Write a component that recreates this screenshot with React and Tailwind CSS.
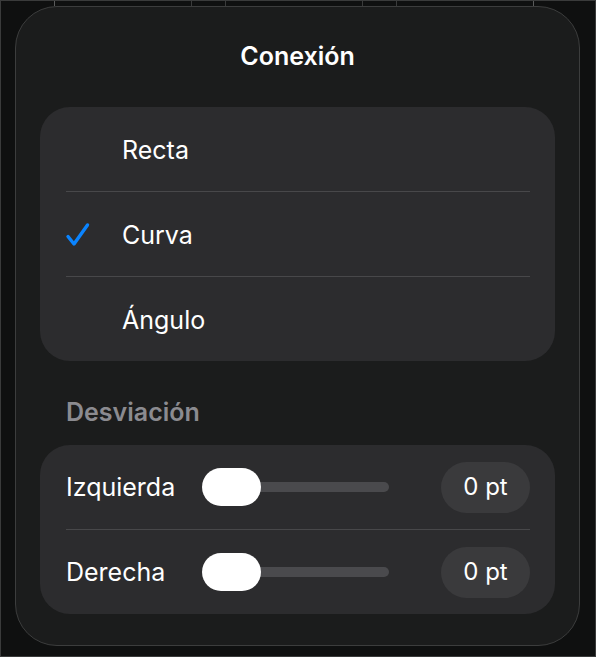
const OPTIONS = ["Recta", "Curva", "Ángulo"];

function Divider() {
  return <div className="h-px bg-[#48484a] ml-[26px] mr-[25px]" />;
}

function CheckMark() {
  return (
    <svg width="30" height="30" viewBox="0 0 30 30" fill="none" className="-ml-[4px] mt-[1px]">
      <path d="M6 16.5 L12 24 L25.5 5" stroke="#0a84ff" strokeWidth="3.4" strokeLinecap="round" strokeLinejoin="round" />
    </svg>
  );
}

function SliderRow({ label }) {
  return (
    <div className="h-[84px] flex items-center pl-[26px] pr-[25px]">
      <span className="w-[136px] pt-[2px] text-[25px] text-white">{label}</span>
      <div className="relative w-[187px] h-[38px] flex items-center">
        <div className="absolute left-[20px] right-0 h-[10px] rounded-full bg-[#4a4a4d]" />
        <div className="relative w-[59px] h-[38px] rounded-full bg-white" />
      </div>
      <div className="ml-auto w-[89px] h-[51px] rounded-full bg-[#3a3a3c] flex items-center justify-center text-[24px] text-white">
        0 pt
      </div>
    </div>
  );
}

export default function App() {
  const selected = "Curva";

  return (
    <div className="w-[596px] h-[657px] bg-[#0f1010] border border-[#3a3b3b] overflow-hidden font-['Inter',sans-serif]">
      {/* backdrop grid peeking above the popover */}
      <div className="h-[5px] flex">
        <div className="w-[54px] border-r border-[#5a5b5b]" />
        <div className="w-[137px] border-r border-[#3a3b3b]" />
        <div className="w-[34px] border-r border-[#3a3b3b]" />
        <div className="w-[137px] border-r border-[#3a3b3b]" />
        <div className="w-[34px] border-r border-[#3a3b3b]" />
        <div className="w-[137px] border-r border-[#5a5b5b]" />
      </div>

      <div className="ml-[14px] w-[565px] h-[640px] rounded-[42px] border border-[#3c3d3d] bg-[#1b1c1c]">
        <div className="h-[100px] flex items-center justify-center">
          <h1 className="text-[25px] font-semibold text-white">Conexión</h1>
        </div>

        <div className="mx-[24px] rounded-[30px] bg-[#2c2c2e]">
          {OPTIONS.map((opt, i) => (
            <div key={opt}>
              {i > 0 && <Divider />}
              <div className="h-[84px] flex items-center pl-[26px]">
                <div className="w-[56px]">{opt === selected && <CheckMark />}</div>
                <span className="pt-[3px] text-[25px] text-white">{opt}</span>
              </div>
            </div>
          ))}
        </div>

        <div className="h-[84px] pt-[37px] pl-[50px]">
          <h2 className="text-[25px] leading-[28px] font-semibold text-[#8b8b90]">Desviación</h2>
        </div>

        <div className="mx-[24px] rounded-[30px] bg-[#2c2c2e]">
          <SliderRow label="Izquierda" />
          <Divider />
          <SliderRow label="Derecha" />
        </div>
      </div>
    </div>
  );
}
